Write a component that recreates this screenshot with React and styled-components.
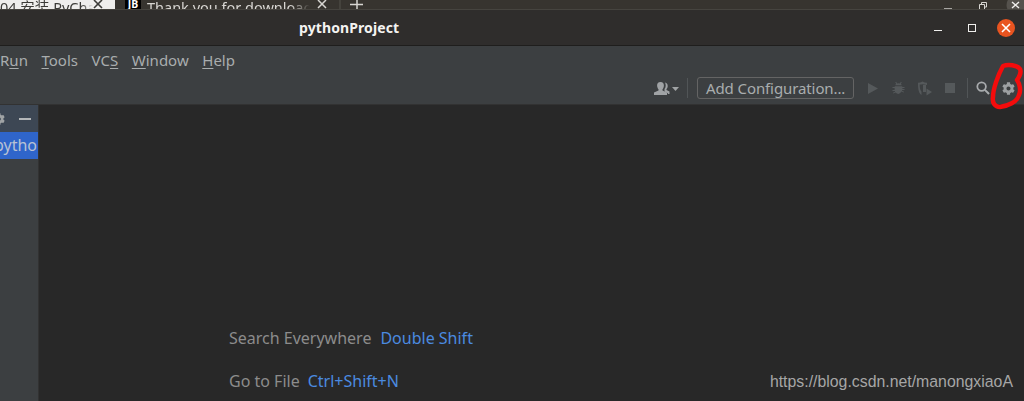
import React from "react";
import styled, { createGlobalStyle } from "styled-components";
import { FaCog } from "react-icons/fa";

const Global = createGlobalStyle`
  html, body { margin: 0; padding: 0; background: #282828; }
  #root { width: 1024px; height: 401px; overflow: hidden; }
`;

const Page = styled.div`
  position: relative;
  width: 1024px;
  height: 401px;
  overflow: hidden;
  display: flex;
  flex-direction: column;
  font-family: "Noto Sans", sans-serif;
`;

const TabStrip = styled.div`
  height: 9px;
  flex: none;
  display: flex;
  overflow: hidden;
  background: #37342f;
  font-size: 14.5px;
  line-height: 20px;
`;

const Tab = styled.div`
  display: flex;
  align-items: flex-start;
  width: ${(p) => p.$width}px;
  flex: none;
  padding-left: ${(p) => p.$pad}px;
  box-sizing: border-box;
  background: ${(p) => (p.$active ? "#efeeec" : "transparent")};
  color: ${(p) => (p.$active ? "#3c3b37" : "#d8d6d2")};
  white-space: nowrap;
  overflow: hidden;
`;

const TabLabel = styled.span`
  margin-top: -3px;
  margin-right: ${(p) => p.$right}px;
  width: ${(p) => p.$width}px;
  flex: none;
  overflow: hidden;
  font-family: "Noto Sans", "Noto Sans CJK SC", sans-serif;
  mask-image: linear-gradient(to right, #000 88%, transparent 100%);
`;

const JbLogo = styled.span`
  width: 16px;
  height: 9px;
  flex: none;
  margin-right: 6px;
  background: #000;
  color: #fff;
  font-size: 10.5px;
  font-weight: 700;
  line-height: 9px;
  text-align: center;
`;

const StripIcon = styled.svg`
  flex: none;
  display: block;
  margin-left: ${(p) => p.$gap || 0}px;
`;

const StripControls = styled.div`
  margin-left: auto;
  margin-right: -2px;
  display: flex;
  align-items: flex-start;
`;

const TitleBar = styled.div`
  height: 37px;
  flex: none;
  display: flex;
  align-items: center;
  justify-content: space-between;
  padding: 0 9px 0 299px;
  background: #2f2d2c;
  border-top: 1px solid #46443f;
  border-bottom: 1px solid #1f1e1d;
  box-sizing: border-box;
`;

const Title = styled.div`
  color: #f4f3f1;
  font-size: 14px;
  font-weight: 700;
  letter-spacing: 0.1px;
`;

const WindowControls = styled.div`
  display: flex;
  align-items: center;
`;

const Minimize = styled.span`
  width: 8px;
  height: 1px;
  margin-top: 5px;
  background: #f0efed;
`;

const Maximize = styled.span`
  width: 6px;
  height: 6px;
  margin-left: 26px;
  border: 1px solid #f0efed;
`;

const CloseButton = styled.span`
  width: 18px;
  height: 18px;
  margin-left: 21px;
  border-radius: 50%;
  background: #e95420;
  display: flex;
  align-items: center;
  justify-content: center;
`;

const MenuArea = styled.div`
  height: 59px;
  flex: none;
  display: flex;
  flex-direction: column;
  background: #3c3f41;
  border-bottom: 1px solid #323232;
  box-sizing: border-box;
`;

const MenuBar = styled.div`
  height: 28px;
  display: flex;
  align-items: center;
  gap: 13.6px;
  color: #a9adae;
  font-size: 15px;
`;

const MenuItem = styled.span`
  u { text-underline-offset: 2px; text-decoration-thickness: 1px; }
`;

const Toolbar = styled.div`
  flex: 1;
  display: flex;
  align-items: center;
  justify-content: flex-end;
  padding: 0 9px 2px 0;
`;

const ToolIcon = styled.svg`
  flex: none;
  display: block;
  margin-left: ${(p) => p.$gap || 0}px;
`;

const Divider = styled.span`
  width: 1px;
  height: 20px;
  flex: none;
  background: #515557;
  margin: 0 ${(p) => p.$right}px 0 ${(p) => p.$left}px;
`;

const ConfigButton = styled.div`
  width: 157px;
  height: 22px;
  box-sizing: border-box;
  flex: none;
  border: 1px solid #646464;
  border-radius: 3px;
  color: #a9adae;
  font-size: 15px;
  letter-spacing: -0.1px;
  line-height: 21px;
  padding-left: 8px;
  white-space: nowrap;
`;

const SettingsGear = styled(FaCog)`
  flex: none;
  display: block;
  margin-left: 12px;
  font-size: 13px;
  color: #9da0a2;
`;

const Body = styled.div`
  flex: 1;
  display: flex;
  min-height: 0;
`;

const Sidebar = styled.div`
  width: 39px;
  flex: none;
  background: #3c3f41;
  border-right: 1px solid #323232;
  box-sizing: border-box;
`;

const SidebarHeader = styled.div`
  height: 27px;
  background: #3d4754;
  display: flex;
  align-items: center;
  justify-content: space-between;
  overflow: hidden;
  padding-right: 7px;
`;

const HeaderGear = styled(FaCog)`
  flex: none;
  margin-left: -7px;
  font-size: 12px;
  color: #a0a3a5;
`;

const SidebarRow = styled.div`
  height: 27px;
  background: #2f65ca;
  color: #b8c2d4;
  font-size: 16px;
  line-height: 27px;
  overflow: hidden;
  white-space: nowrap;
  display: flex;
  justify-content: flex-end;
  padding-right: 1px;
`;

const Main = styled.div`
  flex: 1;
  background: #282828;
  padding: 220px 0 0 190px;
`;

const Hint = styled.div`
  display: flex;
  gap: ${(p) => p.$gap}px;
  height: 43px;
  font-size: 16px;
  line-height: 26px;
  color: #8c8c8c;
`;

const Shortcut = styled.span`
  color: #4b8be0;
`;

const Watermark = styled.div`
  position: absolute;
  right: 11px;
  bottom: 10px;
  color: #a6a6a6;
  font-family: "Liberation Sans", Arial, sans-serif;
  font-size: 15.85px;
  line-height: 18px;
`;

const RedScribble = styled.svg`
  position: absolute;
  left: 990px;
  top: 62px;
`;

export default function App() {
  return (
    <Page>
      <Global />
      <TabStrip>
        <Tab $width={115} $active $pad={0}>
          <TabLabel $width={93} $right={0}>04 安装 PyCharm</TabLabel>
          <svg width="10" height="9" viewBox="0 0 10 9">
            <path d="M1 0 L9 8 M9 0 L1 8" stroke="#3c3b37" strokeWidth="1.6" />
          </svg>
        </Tab>
        <Tab $width={224} $pad={10}>
          <JbLogo>JB</JbLogo>
          <TabLabel $width={163} $right={7}>Thank you for downloading</TabLabel>
          <svg width="10" height="9" viewBox="0 0 10 9">
            <path d="M1 0 L9 8 M9 0 L1 8" stroke="#d8d6d2" strokeWidth="1.5" />
          </svg>
        </Tab>
        <svg width="30" height="9" viewBox="0 0 30 9">
          <path d="M1 0V9" stroke="#55524d" />
          <path d="M18 0V9M11 4.5H24" stroke="#d8d6d2" strokeWidth="1.5" />
        </svg>
        <StripControls>
          <StripIcon width="8" height="9" viewBox="0 0 8 9">
            <path d="M0 8.5H8" stroke="#a8a6a2" />
          </StripIcon>
          <StripIcon $gap={27} width="8" height="9" viewBox="0 0 8 9">
            <path d="M0.5 9V4.500H5.500V9M2.500 4V2.500H7.500V7H6" fill="none" stroke="#d8d6d2" />
          </StripIcon>
          <StripIcon $gap={19} width="20" height="9" viewBox="0 0 20 9">
            <circle cx="10" cy="5" r="9.500" fill="#55524d" />
            <path d="M6 2 L13 8 M13 2 L6 8" stroke="#f0efed" strokeWidth="1.400" />
          </StripIcon>
        </StripControls>
      </TabStrip>
      <TitleBar>
        <Title>pythonProject</Title>
        <WindowControls>
          <Minimize />
          <Maximize />
          <CloseButton>
            <svg width="10" height="10" viewBox="0 0 10 10">
              <path d="M1 1 L9 9 M9 1 L1 9" stroke="#fff" strokeWidth="1.600" />
            </svg>
          </CloseButton>
        </WindowControls>
      </TitleBar>
      <MenuArea>
        <MenuBar>
          <MenuItem>R<u>u</u>n</MenuItem>
          <MenuItem><u>T</u>ools</MenuItem>
          <MenuItem>VC<u>S</u></MenuItem>
          <MenuItem><u>W</u>indow</MenuItem>
          <MenuItem><u>H</u>elp</MenuItem>
        </MenuBar>
        <Toolbar>
          <ToolIcon width="25" height="15" viewBox="0 0 25 15">
            <path
              fill="#a0a3a5"
              d="M6.500 1c2.400 0 3.500 1.700 3.400 3.800-.1 1.600-.7 2.800-1.400 3.500v1.300l4.500 2v2.400H0v-2.400l4.500-2V8.300C3.800 7.600 3.200 6.400 3.100 4.800 3 2.700 4.100 1 6.500 1z"
            />
            <path fill="#a0a3a5" d="M11 1.500c1.800.3 2.800 1.700 2.700 3.500 0 1.300-.5 2.400-1.200 3.100v1l3 1.400v2.500h-1.600v-.8l-3.400-1.700V8c.8-.9 1.200-2 1.200-3.200 0-1.200-.2-2.400-.7-3.300z" />
            <path fill="#a0a3a5" d="M18 6h7l-3.500 4z" />
          </ToolIcon>
          <Divider $left={8} $right={9} />
          <ConfigButton>Add Configuration...</ConfigButton>
          <ToolIcon $gap={14} width="10" height="11" viewBox="0 0 10 11">
            <path fill="#55595b" d="M0 0 10 5.500 0 11z" />
          </ToolIcon>
          <ToolIcon $gap={14} width="13" height="14" viewBox="0 0 14 14">
            <path fill="#55595b" d="M4.500 2.500 3.500.8l.9-.5L5.600 2.200a3 3 0 0 1 2.800 0L9.600.3l.9.5-1 1.700c.5.400.9.900 1 1.500H3.500c.1-.6.500-1.100 1-1.500zM3 5h8a4 4 0 0 1 .2 1H13.500v1H11.200v1.200H13.500v1H11c-.1.300-.2.600-.3.800l2.300 1-.4.900-2.500-1.100A4.500 4.500 0 0 1 7 13.500a4.500 4.500 0 0 1-3.100-1.700l-2.500 1.100-.4-.9 2.300-1c-.1-.2-.2-.5-.3-.8H.5v-1h2.300V7H.5V6h2.300A4 4 0 0 1 3 5z" />
          </ToolIcon>
          <ToolIcon $gap={12} width="15" height="15" viewBox="0 0 15 15">
            <path fill="#55595b" d="M5.500.5c1.500.8 3 1.200 4.500 1.200V4L5.500 3.300c-1 .2-1.800.3-2.800.3 0 2.300.1 5.100 1.800 7.200V14C1.800 12.300 1 8.500 1 1.700 2.500 1.700 4 1.300 5.500.5z" />
            <path fill="#55595b" d="M6 4h3v7H6z" />
            <path fill="#55595b" d="M9.500 7.500 15 11 9.500 14.500z" />
          </ToolIcon>
          <ToolIcon $gap={13} width="10" height="10" viewBox="0 0 10 10">
            <rect width="10" height="10" fill="#55595b" />
          </ToolIcon>
          <Divider $left={12} $right={8} />
          <ToolIcon width="14" height="14" viewBox="0 0 15 15">
            <circle cx="6" cy="6" r="4.600" fill="none" stroke="#a8abad" strokeWidth="1.900" />
            <path d="M9.500 9.500 14 14" stroke="#a8abad" strokeWidth="2.200" />
          </ToolIcon>
          <SettingsGear />
        </Toolbar>
      </MenuArea>
      <Body>
        <Sidebar>
          <SidebarHeader>
            <HeaderGear />
            <svg width="12" height="2" viewBox="0 0 12 2">
              <rect width="12" height="2" fill="#b4b7b9" />
            </svg>
          </SidebarHeader>
          <SidebarRow>pytho</SidebarRow>
        </Sidebar>
        <Main>
          <Hint $gap={9}>
            <span>Search Everywhere</span>
            <Shortcut>Double Shift</Shortcut>
          </Hint>
          <Hint $gap={8}>
            <span>Go to File</span>
            <Shortcut>Ctrl+Shift+N</Shortcut>
          </Hint>
        </Main>
      </Body>
      <RedScribble width="34" height="48" viewBox="0 0 34 48">
        <path
          d="M13 4C18 2 27 3 30 7C32 11 29 15 27 18C30 22 31 29 29 33C27 40 18 44 10 45C5 45 2 41 3 35C3 27 8 13 13 4Z"
          fill="none"
          stroke="#f40c0c"
          strokeWidth="4.500"
          strokeLinejoin="round"
        />
      </RedScribble>
      <Watermark>https://blog.csdn.net/manongxiaoA</Watermark>
    </Page>
  );
}
